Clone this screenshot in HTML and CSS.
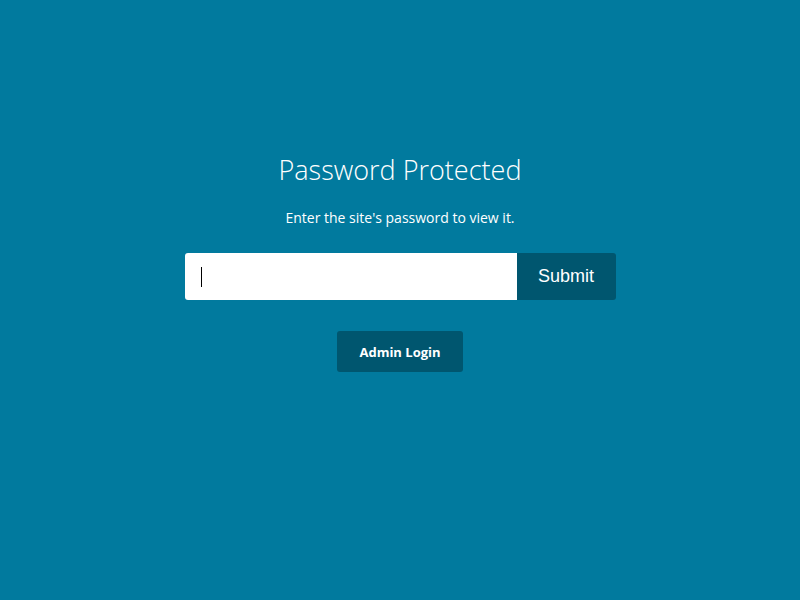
FILE: index.html
```html
<!DOCTYPE html>
<html lang="en">
<head>
<meta charset="utf-8">
<title>Password Protected</title>
<link rel="stylesheet" href="styles.css">
</head>
<body>
<main class="page">
  <h1 class="title">Password Protected</h1>
  <p class="lead">Enter the site's password to view it.</p>
  <form class="pw-form">
    <div class="pw-field">
      <input class="pw-input" type="password" aria-label="Password" autofocus>
      <span class="caret" aria-hidden="true"></span>
    </div>
    <button class="pw-submit" type="button">Submit</button>
  </form>
  <button class="admin-btn" type="button">Admin Login</button>
</main>
</body>
</html>
```

FILE: styles.css
```css
html, body {
  margin: 0;
  padding: 0;
  height: 100%;
}
body {
  background: #017a9e;
  font-family: "Open Sans", "Noto Sans", sans-serif;
  color: #fff;
}
.page {
  display: flex;
  flex-direction: column;
  align-items: center;
  padding-top: 150px;
}
.title {
  margin: 0;
  font-weight: 300;
  font-size: 27px;
  line-height: 40px;
  letter-spacing: 0;
}
.lead {
  margin: 18px 0 0;
  font-size: 14px;
  line-height: 20px;
}
.pw-form {
  display: flex;
  margin-top: 25px;
  height: 47px;
}
.pw-field {
  position: relative;
  display: flex;
}
.pw-input {
  width: 332px;
  box-sizing: border-box;
  border: none;
  border-radius: 3px 0 0 3px;
  background: #fff;
  padding: 0 16px;
  font-size: 18px;
  outline: none;
  caret-color: #000;
}
.caret {
  position: absolute;
  left: 16px;
  top: 14px;
  width: 1px;
  height: 20px;
  background: #000;
}
.pw-submit {
  width: 99px;
  border: none;
  border-radius: 0 3px 3px 0;
  background: #00566f;
  color: #fff;
  font-family: "Liberation Sans", Arial, sans-serif;
  font-size: 18px;
  padding: 0;
}
.admin-btn {
  margin-top: 31px;
  width: 126px;
  height: 41px;
  border: none;
  border-radius: 3px;
  background: #00566f;
  color: #fff;
  font-family: "Open Sans", "Noto Sans", sans-serif;
  font-weight: 700;
  font-size: 13px;
  padding: 0;
}
```
